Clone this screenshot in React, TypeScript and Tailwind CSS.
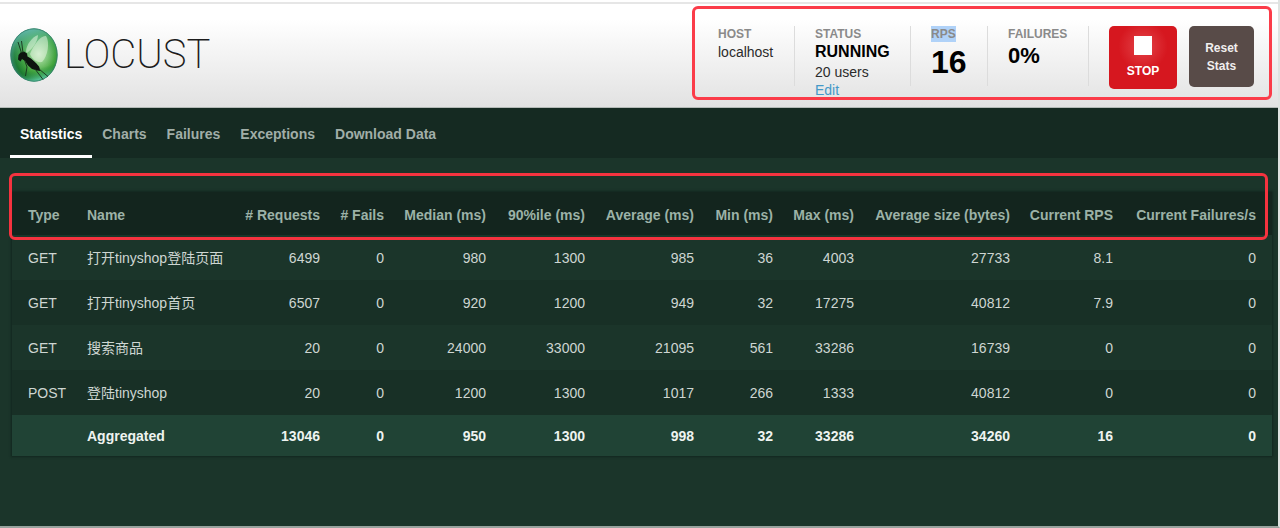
import clsx from "clsx";
import type { ReactNode } from "react";

type Row = {
  type: string;
  name: string;
  values: string[];
};

const tabs = ["Statistics", "Charts", "Failures", "Exceptions", "Download Data"];

const columns = [
  { label: "Type", width: "w-[65px]" },
  { label: "Name", width: "w-[157px]" },
  { label: "# Requests", width: "w-[96px]" },
  { label: "# Fails", width: "w-[64px]" },
  { label: "Median (ms)", width: "w-[102px]" },
  { label: "90%ile (ms)", width: "w-[99px]" },
  { label: "Average (ms)", width: "w-[109px]" },
  { label: "Min (ms)", width: "w-[79px]" },
  { label: "Max (ms)", width: "w-[81px]" },
  { label: "Average size (bytes)", width: "w-[156px]" },
  { label: "Current RPS", width: "w-[103px]" },
  { label: "Current Failures/s", width: "w-[149px]" },
];

const rows: Row[] = [
  { type: "GET", name: "打开tinyshop登陆页面", values: ["6499", "0", "980", "1300", "985", "36", "4003", "27733", "8.1", "0"] },
  { type: "GET", name: "打开tinyshop首页", values: ["6507", "0", "920", "1200", "949", "32", "17275", "40812", "7.9", "0"] },
  { type: "GET", name: "搜索商品", values: ["20", "0", "24000", "33000", "21095", "561", "33286", "16739", "0", "0"] },
  { type: "POST", name: "登陆tinyshop", values: ["20", "0", "1200", "1300", "1017", "266", "1333", "40812", "0", "0"] },
];

const totals = ["13046", "0", "950", "1300", "998", "32", "33286", "34260", "16", "0"];

function Logo() {
  return (
    <a href="#" className="flex items-center gap-1.5 text-[#1c1c1c]">
      <svg width="48" height="54" viewBox="0 0 48 54" aria-hidden="true">
        <defs>
          <radialGradient id="orb" cx="0.6" cy="0.48" r="0.58">
            <stop offset="0" stopColor="#d4f0c8" />
            <stop offset="0.3" stopColor="#8fd086" />
            <stop offset="0.6" stopColor="#45a63f" />
            <stop offset="0.88" stopColor="#1c7a30" />
            <stop offset="1" stopColor="#2c7f5a" />
          </radialGradient>
          <linearGradient id="sky" x1="0.2" y1="0" x2="0.45" y2="1">
            <stop offset="0" stopColor="#6fc3c4" stopOpacity="0.95" />
            <stop offset="0.4" stopColor="#5fb99a" stopOpacity="0.25" />
            <stop offset="0.8" stopColor="#1c7d33" stopOpacity="0" />
            <stop offset="1" stopColor="#62d0ac" stopOpacity="0.8" />
          </linearGradient>
        </defs>
        <ellipse cx="24" cy="27" rx="23.5" ry="26.5" fill="url(#orb)" />
        <ellipse cx="24" cy="27" rx="23.5" ry="26.5" fill="url(#sky)" />
        <ellipse cx="24" cy="27" rx="23.2" ry="26.2" fill="none" stroke="#347d6c" strokeWidth="0.8" />
        <path d="M16 24 C16 17 22 9 28 7 C28 13 23 20 17 25Z" fill="#e2f5e0" opacity="0.55" />
        <path d="M20 26 C24 16 31 7 36 8 C40 14 38 28 32 34 C27 35 22 31 20 26Z" fill="#edf9e8" opacity="0.5" />
        <path
          d="M8.500 27 L10.500 24.500 L14 23.500 L17 25.500 L17.500 28.500 L21 30.500 L26 35 L29 38.500 L30.500 43 L27 42.500 L22 41 L18 37.500 L15 33 L12 31 L10.500 33.500 L8 31.500Z"
          fill="#0d140f"
        />
        <path
          d="M11.500 25 L8 14 M13 25 L11.500 13 M14.500 32 L17 39 L15.500 48 M29 41 L38 48.500 M25 41 L33 51.500"
          fill="none"
          stroke="#16301c"
          strokeWidth="0.9"
        />
      </svg>
      <span className="font-[Roboto,sans-serif] text-[40px] leading-[54px] font-extralight">LOCUST</span>
    </a>
  );
}

function Stat({ label, className, selected, children }: { label: string; className: string; selected?: boolean; children: ReactNode }) {
  return (
    <div className={clsx("h-[60px] border-r border-[#dcdcdc]", className)}>
      <div className="flex text-xs leading-4 font-bold text-[#8a8a8a]">
        <span className={clsx(selected && "bg-[#b0d2f8]")}>{label}</span>
      </div>
      {children}
    </div>
  );
}

function Header() {
  return (
    <header className="flex h-[106px] items-start justify-between border-t-2 border-b border-t-[#e6e6e6] border-b-[#b4bab7] bg-linear-to-b from-white from-15% to-[#e2e2e2] pr-6 pl-2.5">
      <div className="pt-6">
        <Logo />
      </div>
      <div className="relative flex pt-[22px] text-sm leading-5 text-[#2b2b2b]">
        <Stat label="HOST" className="w-[77px]">
          localhost
        </Stat>
        <Stat label="STATUS" className="w-[116px] pl-5">
          <div className="text-base leading-5 font-bold text-black">RUNNING</div>
          <div>20 users</div>
          <a href="#" className="block leading-4 text-[#4499c8]">
            Edit
          </a>
        </Stat>
        <Stat label="RPS" className="w-[77px] pl-5" selected>
          <div className="text-[32px] leading-10 font-bold text-black">16</div>
        </Stat>
        <Stat label="FAILURES" className="w-[101px] pl-5">
          <div className="text-[22px] leading-7 font-bold text-black">0%</div>
        </Stat>
        <button
          type="button"
          className="ml-5 flex h-[63px] w-[68px] flex-col items-center rounded-[5px] bg-[#d6171f] bg-radial-[circle_at_50%_32%] from-[#e03a40] from-10% to-[#d6171f] to-45% pt-2.5 text-xs leading-4 font-bold text-white"
        >
          <span className="mb-2 h-[19px] w-[18px] bg-white" />
          STOP
        </button>
        <button
          type="button"
          className="ml-3 h-[61px] w-[65px] rounded-[5px] bg-[#584b48] px-3 text-xs leading-[18px] font-bold text-[#f0eeee]"
        >
          Reset Stats
        </button>
        <div className="pointer-events-none absolute top-0.5 -right-[18px] -left-[26px] h-[94px] rounded-md border-3 border-[#fb3c49]" />
      </div>
    </header>
  );
}

function StatsTable() {
  return (
    <div className="relative mx-3 mr-1.5 shadow-[0_0_2px_1px_#12271f]">
      <table className="w-full table-fixed border-collapse text-right text-sm leading-5 text-[#ced6d2]">
        <thead className="bg-[#13251e] text-[#9cb2a7]">
          <tr className="h-[43px]">
            {columns.map((column, i) => (
              <th
                key={column.label}
                scope="col"
                className={clsx("pt-0.5 pr-2.5 font-bold whitespace-nowrap last:pr-4", column.width, i === 0 && "pl-4 text-left", i === 1 && "pl-2.5 text-left")}
              >
                {column.label}
              </th>
            ))}
          </tr>
        </thead>
        <tbody>
          {rows.map((row) => (
            <tr key={row.name} className="h-[45px] bg-[#1b352a] even:bg-[#183026]">
              <td className="pl-4 text-left">{row.type}</td>
              <td className="pl-2.5 text-left whitespace-nowrap">{row.name}</td>
              {row.values.map((value, i) => (
                <td key={i} className="pr-2.5 last:pr-4">
                  {value}
                </td>
              ))}
            </tr>
          ))}
        </tbody>
        <tfoot>
          <tr className="h-[41px] bg-[#204335] font-bold text-[#eef3f0]">
            <td />
            <td className="pl-2.5 text-left">Aggregated</td>
            {totals.map((value, i) => (
              <td key={i} className="pr-2.5 last:pr-4">
                {value}
              </td>
            ))}
          </tr>
        </tfoot>
      </table>
      <div className="pointer-events-none absolute -top-[19px] right-1 -left-[3px] h-[67px] rounded-md border-3 border-[#f5333f]" />
    </div>
  );
}

export default function App() {
  return (
    <div className="min-h-screen border-r-2 border-b-2 border-r-[#dfe3e1] border-b-[#98a39e] bg-[#1b352a] font-['Liberation_Sans','Noto_Sans_CJK_SC',sans-serif]">
      <div className="bg-white pt-0.5">
        <Header />
      </div>
      <nav className="flex h-[50px] bg-[#152a22] px-2.5 text-sm font-bold">
        {tabs.map((tab, i) => (
          <a
            key={tab}
            href="#"
            className={clsx(
              "border-b-3 px-2.5 pt-4 leading-5",
              i === 0 ? "border-white text-white" : "border-transparent text-[#a1aea8]"
            )}
          >
            {tab}
          </a>
        ))}
      </nav>
      <main className="pt-[34px]">
        <StatsTable />
      </main>
    </div>
  );
}
